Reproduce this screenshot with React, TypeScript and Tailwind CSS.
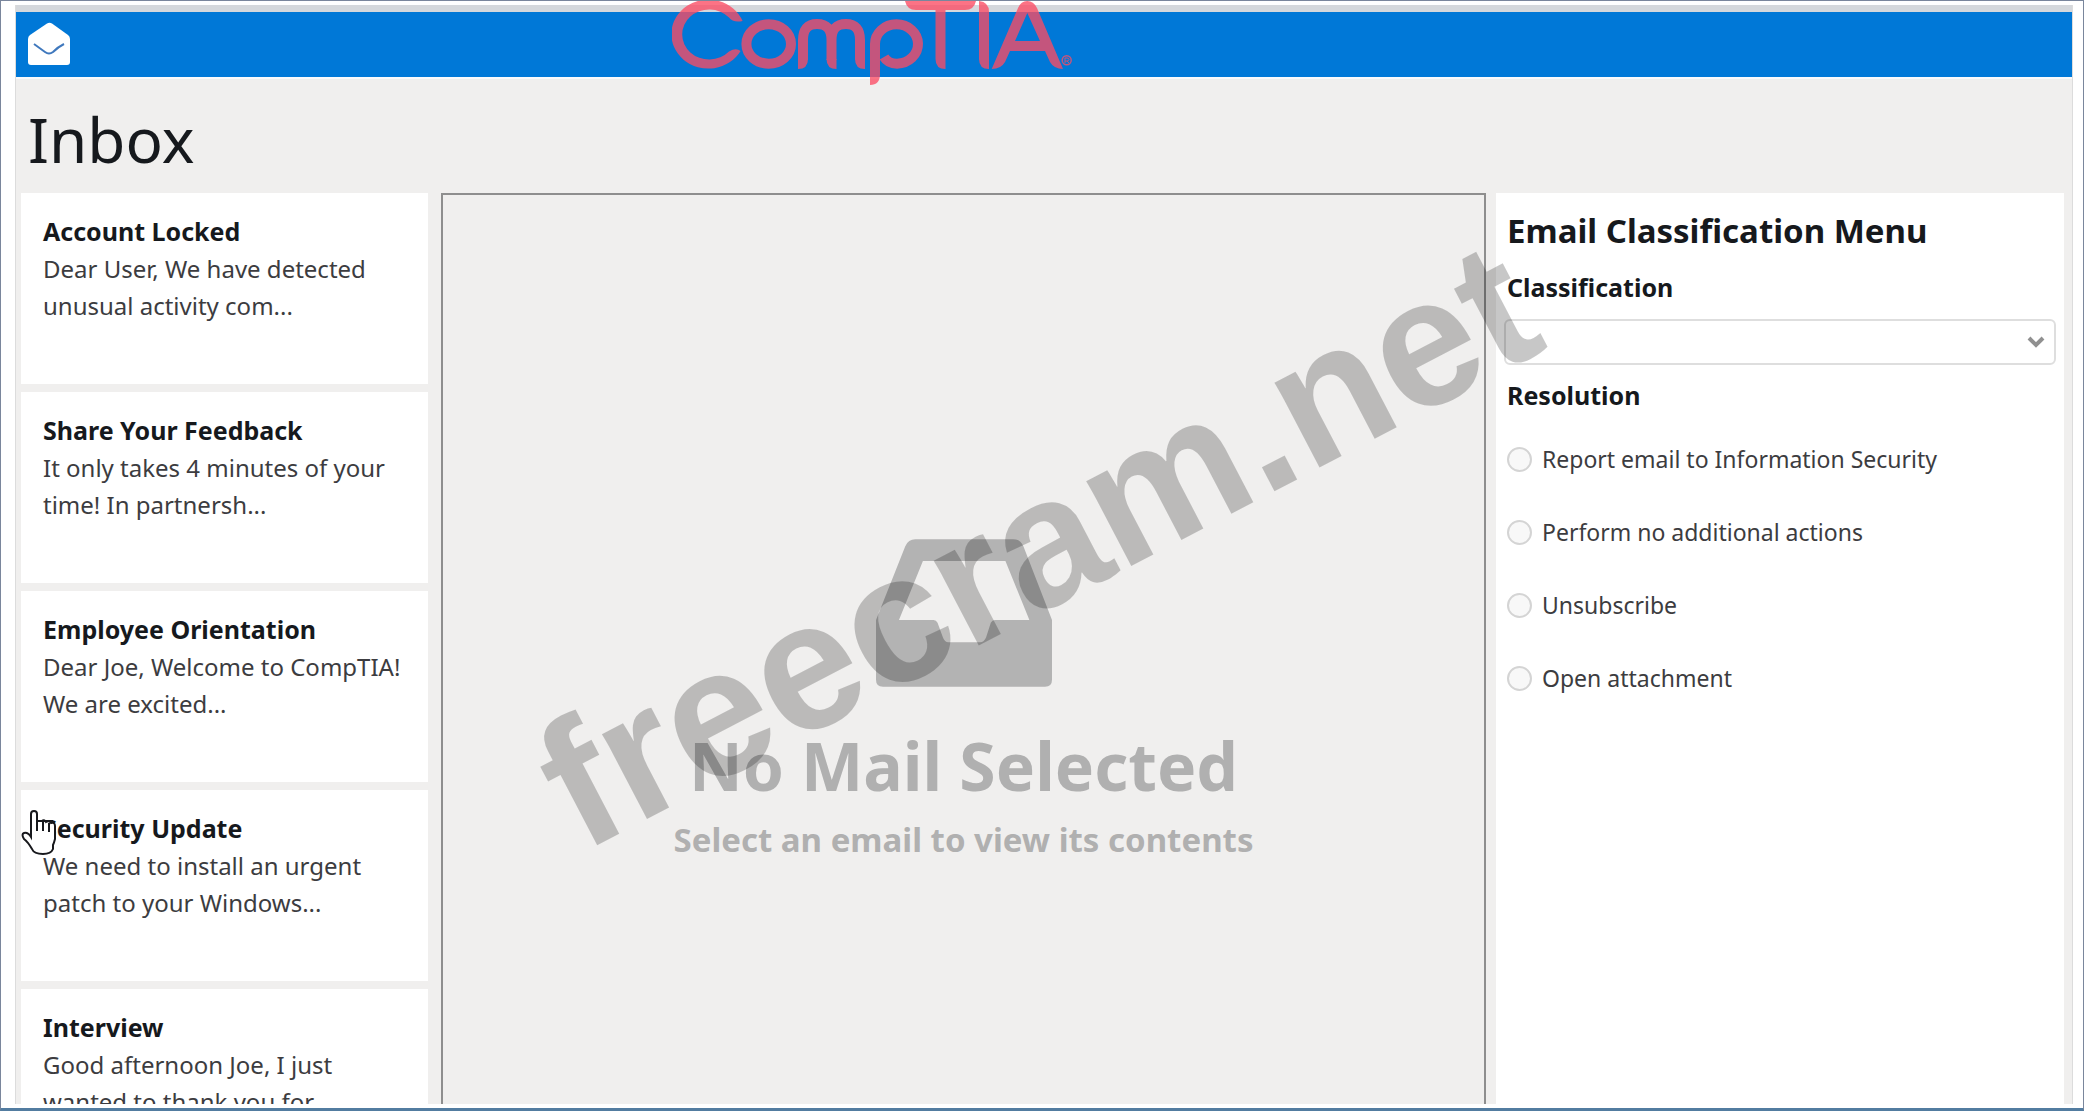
import { useState } from 'react';

const emails = [
  { subject: 'Account Locked', preview: 'Dear User, We have detected unusual activity com...' },
  { subject: 'Share Your Feedback', preview: 'It only takes 4 minutes of your time! In partnersh...' },
  { subject: 'Employee Orientation', preview: 'Dear Joe, Welcome to CompTIA! We are excited...' },
  { subject: 'Security Update', preview: 'We need to install an urgent patch to your Windows...' },
  { subject: 'Interview', preview: 'Good afternoon Joe, I just wanted to thank you for...' },
];

const resolutions = [
  'Report email to Information Security',
  'Perform no additional actions',
  'Unsubscribe',
  'Open attachment',
];

function MailIcon() {
  return (
    <svg className="h-11 w-11" viewBox="0 0 44 44" aria-hidden="true">
      <path d="M2 13 19 1.500Q21.500 0 24 1.500L40 13Q42 14.500 42 17V40Q42 43 39 43H3Q0 43 0 40V17Q0 14.500 2 13Z" fill="#fff" />
      <path d="M6 22 17 30Q21 33 25 30Q30 25 36 22" fill="none" stroke="#3f78bd" strokeWidth="2" />
    </svg>
  );
}

function CompTiaLogo() {
  return (
    <svg className="absolute left-[671px] -top-px h-[86px] w-[402px]" viewBox="0 0 402 86" aria-label="CompTIA" role="img">
      <g fill="#fc4c64" opacity="0.78">
        <path d="M70.600 21A37 34.500 0 1 0 68.600 51Q64 47.500 57 51.500A27 25 0 1 1 57 17.500Q61 23 70.600 21Z" />
        <g fill="none" stroke="#fc4c64" strokeWidth="10">
          <ellipse cx="96.700" cy="44" rx="22.300" ry="19.700" />
          <path d="M131 60V40Q131 24 145 24Q159.500 24 159.500 40V60M159.500 40Q159.500 24 174 24Q188 24 188 40V60" />
          <path d="M203 75V44A21.500 19.700 0 1 1 225 63.700Q216 63.700 212 57" />
        </g>
        <path d="M126 59H136Q136 69 126 69ZM154.500 59H164.500V69Q154.500 69 154.500 59ZM183 59H193V69Q183 69 183 59ZM198 74H208Q208 85 198 85Z" />
        <path d="M233 1H304Q302 10 293 10H273.500V69Q263.500 69 263.500 59V10H244Q235 10 233 1Z" />
        <path d="M307 1Q317 2 317 12V69Q307 69 307 59Z" />
        <path
          fillRule="evenodd"
          d="M319.700 69 346 8Q349 1 355.300 1Q361.500 1 365 8L391 69Q382 69 378 62L373 51H338L333 62Q329 69 319.700 69ZM343 41H368L355.300 13Z"
        />
        <circle cx="394.700" cy="60.300" r="4.500" fill="none" stroke="#fc4c64" strokeWidth="1.500" />
        <path d="M393 63V58H395Q397 58 397 59.500Q397 61 395 61H393M395 61L397 63" fill="none" stroke="#fc4c64" />
      </g>
    </svg>
  );
}

function InboxIcon() {
  return (
    <svg className="h-[148px] w-[176px]" viewBox="107 57 529 444" aria-hidden="true">
      <path
        fill="#b3b3b3"
        fillRule="evenodd"
        d="M107 300 195 78Q204 57 225 57H520Q541 57 550 78L636 300V480Q636 501 615 501H128Q107 501 107 480ZM248 123 176 300H280Q288 300 292 308L308 352Q313 367 325 367H420Q432 367 438 352L452 308Q456 300 464 300H568L496 123Z"
      />
    </svg>
  );
}

function HandCursor() {
  return (
    <svg className="pointer-events-none absolute left-0 top-5 h-[46px] w-9" viewBox="0 0 36 46" aria-hidden="true">
      <path
        d="M10 27V4Q10 1 13 1Q16 1 16 4V11H21Q23 9 25 12Q28 10 30 13Q34 12 34 16V29Q33 33 32 35V39Q30 44 22 44Q13 44 11 39Q7 32 3 29Q0 24 3 23Q7 22 10 27Z"
        fill="#fff"
        stroke="#17181c"
        strokeWidth="2"
      />
      <path d="M16 11V21M22 11V21M28 13V22M16 11H32" fill="none" stroke="#17181c" strokeWidth="2" />
    </svg>
  );
}

export default function App() {
  const [selected, setSelected] = useState('');

  return (
    <div className="relative flex h-screen flex-col overflow-hidden border border-b-3 border-[#7a869c] border-b-[#527ca0] bg-white pl-3.5 pr-2.5 pt-1 pb-1 font-['Noto_Sans',sans-serif] text-[#16191d]">
      <div className="flex min-h-0 flex-1 flex-col border-x border-[#dcdcdc] bg-[#f0efee]">
        <header className="h-[74px] shrink-0 border-t-7 border-b-2 border-t-[#d5d8dc] border-b-[#f8fafc] bg-[#0078d7] px-3 py-2.5">
          <MailIcon />
        </header>
        <h1 className="h-[114px] shrink-0 px-3 pt-[18px] text-[62px] leading-[84px]">Inbox</h1>
        <main className="flex min-h-0 flex-1 pl-[5px] pr-2">
          <nav className="flex w-[407px] shrink-0 flex-col gap-2 overflow-hidden" aria-label="Messages">
            {emails.map((email) => (
              <button
                key={email.subject}
                className="relative flex h-[191px] shrink-0 flex-col bg-white pl-[22px] pr-4 pt-5 text-left text-2xl"
              >
                <span className="text-[25px] leading-[37px] font-bold">{email.subject}</span>
                <span className="leading-[37px] text-[#3c3c40]">{email.preview}</span>
                {email.subject === 'Security Update' && <HandCursor />}
              </button>
            ))}
          </nav>
          <section className="ml-[13px] flex flex-1 flex-col items-center border-2 border-b-0 border-[#8e8e8e] pt-[344px] text-[#b0b0b0]">
            <InboxIcon />
            <h2 className="mt-[38px] text-[66px] leading-[80px] font-bold">No Mail Selected</h2>
            <p className="mt-[15px] text-[33px] leading-10 font-bold">Select an email to view its contents</p>
          </section>
          <aside className="ml-2.5 w-[568px] shrink-0 bg-white px-2 pt-4">
            <h2 className="px-[3px] text-[33px] leading-[44px] font-bold">Email Classification Menu</h2>
            <label htmlFor="classification" className="mt-4 block px-[3px] text-[25px] leading-9 font-bold">Classification</label>
            <div className="relative mt-[14px]">
              <select
                id="classification"
                className="block h-[46px] w-full appearance-none rounded-md border-2 border-[#dedede] bg-white px-3"
              >
                <option></option>
              </select>
              <svg className="pointer-events-none absolute right-2.5 top-4 h-3.5 w-5" viewBox="0 0 20 14" aria-hidden="true">
                <path d="m3 3 7 7 7-7" fill="none" stroke="#909090" strokeWidth="4" />
              </svg>
            </div>
            <fieldset className="px-[3px]">
              <legend className="pt-3 text-[25px] leading-9 font-bold">Resolution</legend>
              <div className="mt-7 flex flex-col gap-[37px]">
                {resolutions.map((label) => (
                  <label key={label} className="flex items-center gap-2.5 text-[23px] leading-9 text-[#3c3c40]">
                    <input
                      type="radio"
                      name="resolution"
                      checked={selected === label}
                      onChange={() => setSelected(label)}
                      className="h-[25px] w-[25px] appearance-none rounded-full border-2 border-[#d4d4d4] bg-[#f8f8f8] checked:border-8 checked:border-[#0078d7]"
                    />
                    {label}
                  </label>
                ))}
              </div>
            </fieldset>
          </aside>
        </main>
      </div>
      <CompTiaLogo />
      <div className="pointer-events-none absolute left-[594px] top-[695px] origin-bottom-left rotate-[-27.6deg] font-['Liberation_Sans',sans-serif] text-[182px] leading-none font-bold text-black/22">
        freecram.net
      </div>
    </div>
  );
}
